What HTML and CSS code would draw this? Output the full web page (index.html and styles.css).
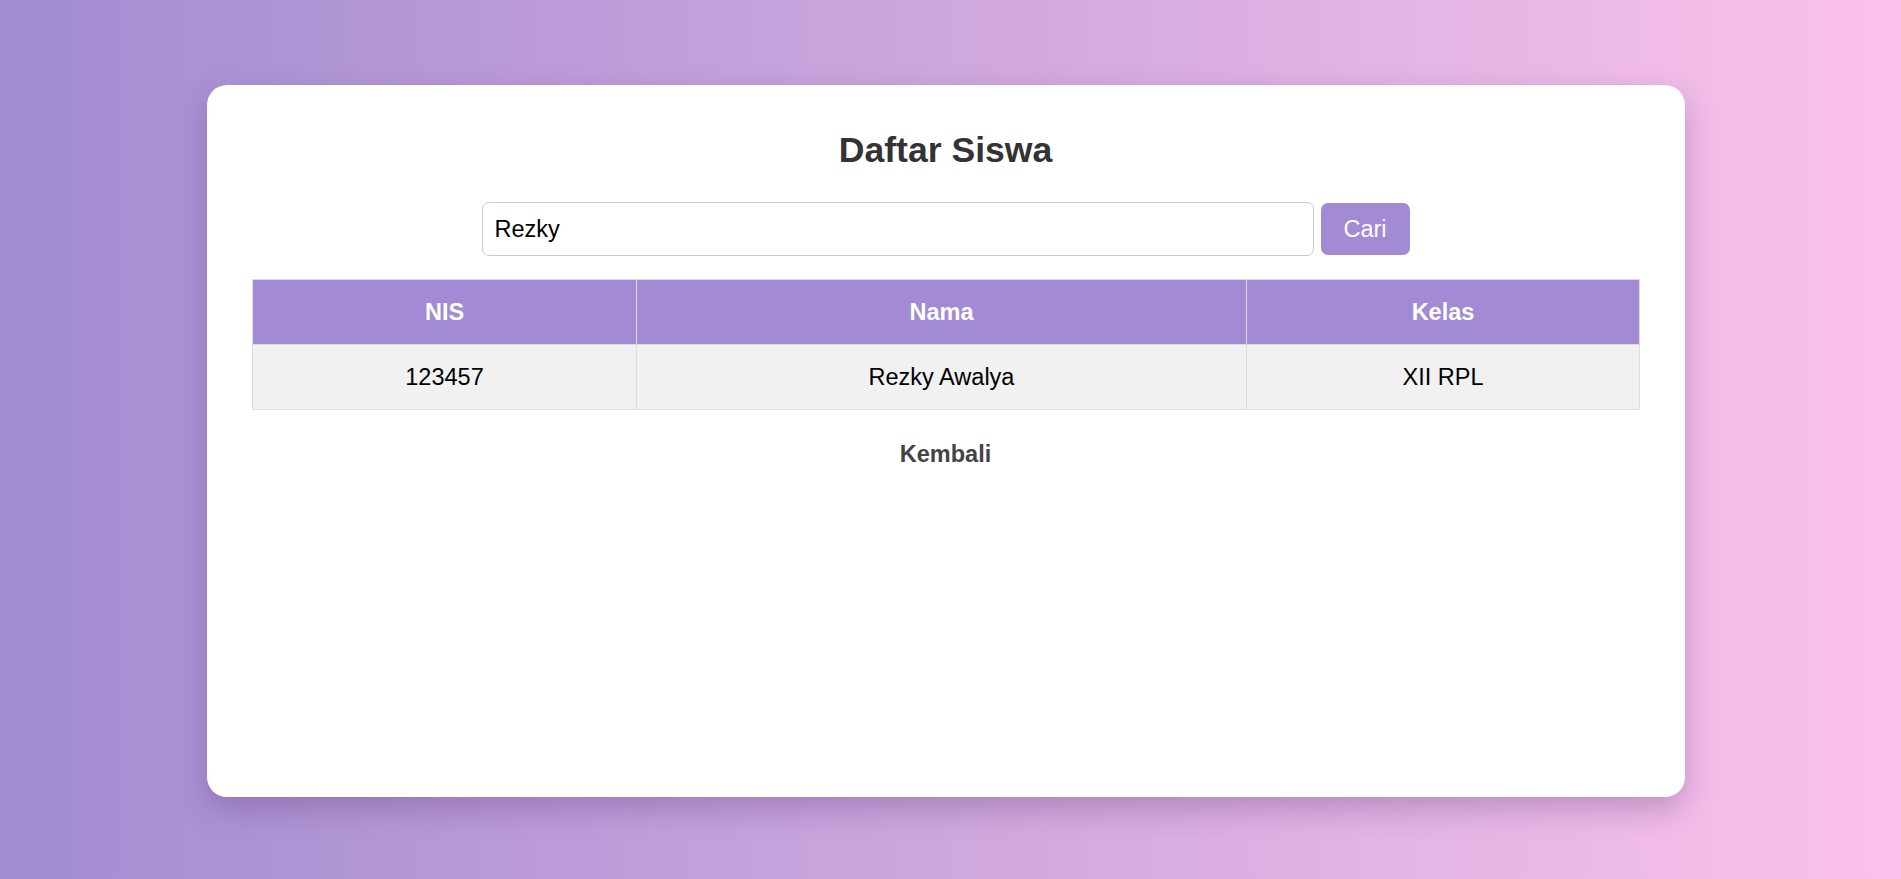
FILE: index.html
```html
<!DOCTYPE html>
<html lang="id">
<head>
<meta charset="utf-8">
<title>Daftar Siswa</title>
<link rel="stylesheet" href="styles.css">
</head>
<body>
  <main class="card">
    <h2 class="title">Daftar Siswa</h2>
    <form class="search">
      <input class="search-input" type="text" value="Rezky">
      <button class="search-btn" type="button">Cari</button>
    </form>
    <table class="students">
      <thead>
        <tr>
          <th class="col-nis">NIS</th>
          <th class="col-nama">Nama</th>
          <th class="col-kelas">Kelas</th>
        </tr>
      </thead>
      <tbody>
        <tr>
          <td>123457</td>
          <td>Rezky Awalya</td>
          <td>XII RPL</td>
        </tr>
      </tbody>
    </table>
    <div class="back-wrap"><a class="back" href="#">Kembali</a></div>
  </main>
</body>
</html>
```
FILE: styles.css
```css
* { box-sizing: border-box; }

html, body {
  margin: 0;
  height: 100%;
}

body {
  font-family: "Liberation Sans", Arial, sans-serif;
  background: linear-gradient(to right, #a18cd1, #fbc2eb);
  padding-top: 85px;
  overflow: hidden;
}

.card {
  width: 1478px;
  height: 712px;
  margin-left: 207px;
  background: #fff;
  border-radius: 20px;
  box-shadow: 0 12px 30px rgba(80, 40, 100, 0.28);
  padding: 44px 46px 44px 45px;
}

.title {
  margin: 1px 0 31px;
  text-align: center;
  font-size: 35.6px;
  font-weight: bold;
  color: #333;
}

.search {
  display: flex;
  justify-content: center;
  align-items: center;
  gap: 7px;
  margin: 0 0 23px;
}

.search-input {
  width: 832px;
  height: 54px;
  border: 1px solid #ccc;
  border-radius: 7px;
  padding: 0 12px;
  font-family: "Liberation Sans", Arial, sans-serif;
  font-size: 23.5px;
  color: #000;
  outline: none;
}

.search-btn {
  width: 89px;
  height: 52px;
  border: none;
  border-radius: 7px;
  background: #a28bd4;
  color: #fff;
  font-family: "Liberation Sans", Arial, sans-serif;
  font-size: 23.5px;
}

.students {
  width: 100%;
  border-collapse: collapse;
  table-layout: fixed;
  font-size: 23.5px;
}

.students th,
.students td {
  border: 1px solid #ddd;
  padding: 18px 10px;
  line-height: 28px;
  text-align: center;
}

.students th {
  background: #a28bd4;
  color: #fff;
  font-weight: bold;
}

.students td {
  background: #f1f1f1;
  color: #000;
}

.col-nis { width: 384px; }
.col-nama { width: 610px; }
.col-kelas { width: 393px; }

.back-wrap {
  text-align: center;
  margin-top: 31px;
  line-height: 27px;
}

.back {
  font-size: 23.5px;
  font-weight: bold;
  color: #444;
  text-decoration: none;
}
```
